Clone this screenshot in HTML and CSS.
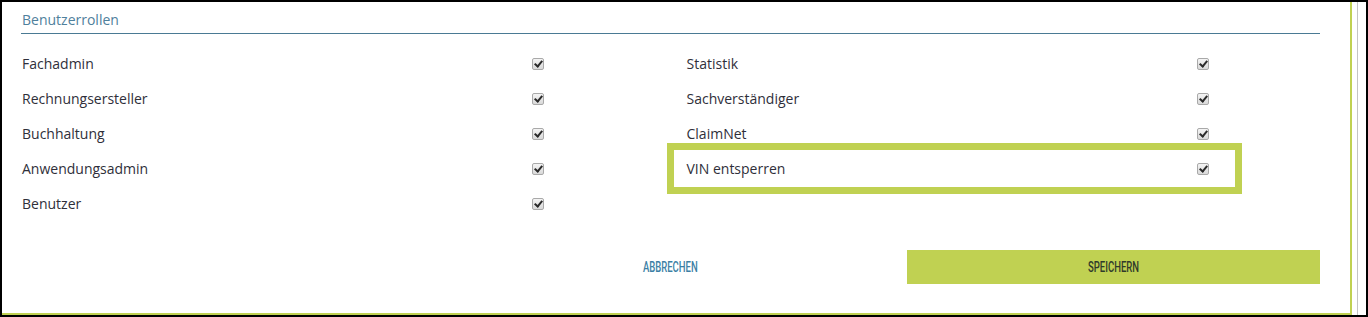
FILE: index.html
```html
<!DOCTYPE html>
<html lang="de">
<head>
  <meta charset="UTF-8" />
  <title>Benutzerrollen</title>
  <link rel="stylesheet" href="styles.css">
</head>
<body>
  <div class="frame">
    <div class="panel">
      <h3 class="section-title">Benutzerrollen</h3>

      <!-- Rollen: erste Spalte 5, zweite Spalte 4 -->
      <div class="roles">
        <label class="role"><span>Fachadmin</span><input type="checkbox" checked></label>
        <label class="role"><span>Rechnungsersteller</span><input type="checkbox" checked></label>
        <label class="role"><span>Buchhaltung</span><input type="checkbox" checked></label>
        <label class="role"><span>Anwendungsadmin</span><input type="checkbox" checked></label>
        <label class="role"><span>Benutzer</span><input type="checkbox" checked></label>
        <label class="role"><span>Statistik</span><input type="checkbox" checked></label>
        <label class="role"><span>Sachverständiger</span><input type="checkbox" checked></label>
        <label class="role"><span>ClaimNet</span><input type="checkbox" checked></label>
        <label class="role highlight"><span>VIN entsperren</span><input type="checkbox" checked></label>
      </div>

      <div class="actions">
        <button class="btn btn-cancel"><span>ABBRECHEN</span></button>
        <button class="btn btn-save"><span>SPEICHERN</span></button>
      </div>
    </div>
    <div class="rail"></div>
  </div>
</body>
</html>
```

FILE: styles.css
```css
html, body {
  margin: 0;
  padding: 0;
  background: #fff;
}
body {
  font-family: "Open Sans", Arial, sans-serif;
  color: #2f2f3a;
}
.frame {
  display: flex;
  height: 317px;
  box-sizing: border-box;
  border: 2px solid #000;
  background: #fff;
}
.panel {
  flex: 1;
  padding: 8px 30px 29px 19px;
  border-right: 2px solid #c0d152;
  border-bottom: 2px solid #c0d152;
}
.rail {
  width: 8px;
  margin-left: 5px;
  border-left: 1px solid #c4c4c4;
}
.section-title {
  margin: 0;
  padding: 0 0 3px 1px;
  font-size: 14px;
  font-weight: normal;
  line-height: 20px;
  color: #4f809c;
  border-bottom: 1px solid #4a7a94;
}
.roles {
  display: grid;
  grid-template-columns: 1fr 1fr;
  grid-template-rows: repeat(5, 35px);
  grid-auto-flow: column;
  column-gap: 30px;
  margin-top: 12px;
}
.role {
  display: flex;
  align-items: center;
  position: relative;
  font-size: 14px;
}
.role span {
  flex: 0 0 510px;
  padding-left: 1px;
}
.role input {
  appearance: none;
  -webkit-appearance: none;
  position: relative;
  width: 12px;
  height: 12px;
  margin: 1px 0 0 0;
  border: 1px solid #a9a9a9;
  border-radius: 2px;
  background: linear-gradient(#f4f4f4, #d9d9d9);
}
.role input:checked::after {
  content: "";
  position: absolute;
  left: 3px;
  top: 0px;
  width: 3px;
  height: 6px;
  border: solid #2a2a2a;
  border-width: 0 2px 2px 0;
  transform: rotate(40deg);
}
.highlight::before {
  content: "";
  position: absolute;
  left: -19px;
  top: -8px;
  width: 575px;
  height: 51px;
  box-sizing: border-box;
  border: 7px solid #c0d152;
  pointer-events: none;
}
.actions {
  display: grid;
  grid-template-columns: repeat(3, 1fr);
  column-gap: 30px;
  margin-top: 29px;
}
.btn {
  height: 34px;
  border: 0;
  padding: 0;
  font-family: Roboto, "Liberation Sans", sans-serif;
  font-size: 14px;
  font-weight: 500;
  cursor: pointer;
}
.btn span {
  display: inline-block;
  transform: scaleX(0.68);
}
.btn-cancel {
  grid-column: 2;
  background: #fff;
  color: #3c7fa5;
}
.btn-save {
  grid-column: 3;
  background: #c0d152;
  color: #2f3a2a;
}
```
